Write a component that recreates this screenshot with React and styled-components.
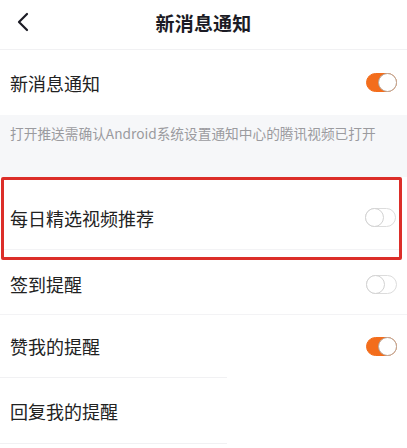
import React from 'react';
import styled, { createGlobalStyle } from 'styled-components';

const GlobalStyle = createGlobalStyle`
  html, body { margin: 0; padding: 0; background: #fff; }
  body { font-family: "Noto Sans CJK SC", "Noto Sans", sans-serif; }
`;

const Page = styled.div`
  width: 407px;
  height: 448px;
  overflow: hidden;
  background: #fff;
`;

const Header = styled.div`
  position: relative;
  height: 49px;
  display: flex;
  align-items: center;
  justify-content: center;
  border-bottom: 1px solid #f1f1f3;
`;

const Back = styled.div`
  position: absolute;
  left: 16px;
  top: 12px;
  width: 16px;
  height: 20px;
  display: flex;
`;

const Title = styled.div`
  font-size: 19px;
  font-weight: 700;
  color: #1b1b24;
  letter-spacing: 0.2px;
  margin-top: -5px;
`;

const Row = styled.div`
  display: flex;
  align-items: center;
  justify-content: space-between;
  height: ${p => p.h}px;
  padding: ${p => p.pad || '0 10px'};
  box-sizing: border-box;
  border-bottom: ${p => (p.line ? '1px solid #f3f3f5' : 'none')};
`;

const Label = styled.span`
  font-size: 18px;
  color: #222;
`;

const Note = styled.div`
  background: #f6f7f9;
  height: 62px;
  box-sizing: border-box;
  padding: 9px 10px 0;
  font-size: 13.7px;
  color: #9b9b9f;
  line-height: 18px;
  white-space: nowrap;
`;

const Highlight = styled.div`
  margin: 0 5px 0 1px;
  border: 3px solid #dc2e29;
  border-radius: 2px;
  padding-bottom: 7px;
  background: #fff;
`;

const ShortLine = styled.div`
  width: ${p => p.w}px;
  height: 1px;
  background: #f1f1f3;
`;

const Track = styled.div`
  position: relative;
  width: 31px;
  height: 19px;
  border-radius: 10px;
  box-sizing: border-box;
  background: ${p => (p.on ? '#f36d1c' : '#fff')};
  border: 1px solid ${p => (p.on ? '#f36d1c' : '#dcdcdc')};
`;

const Knob = styled.div`
  position: absolute;
  top: -1px;
  ${p => (p.on ? 'right: -1px;' : 'left: -1px;')}
  width: 19px;
  height: 19px;
  border-radius: 50%;
  box-sizing: border-box;
  background: #fff;
  border: 1px solid ${p => (p.on ? '#b8a89c' : '#d2d2d2')};
`;

const Toggle = ({ on }) => (
  <Track on={on}>
    <Knob on={on} />
  </Track>
);

export default function App() {
  return (
    <Page>
      <GlobalStyle />
      <Header>
        <Back>
          <svg width="16" height="20" viewBox="0 0 16 20">
            <polyline points="11,2 3,10 11,18" fill="none" stroke="#1b1b24" strokeWidth="2.2" strokeLinecap="round" strokeLinejoin="round" />
          </svg>
        </Back>
        <Title>新消息通知</Title>
      </Header>
      <Row h={65}>
        <Label>新消息通知</Label>
        <Toggle on />
      </Row>
      <Note>打开推送需确认Android系统设置通知中心的腾讯视频已打开</Note>
      <Highlight>
        <Row h={70} pad="6px 3px 0 6px" line>
          <Label>每日精选视频推荐</Label>
          <Toggle />
        </Row>
      </Highlight>
      <Row h={55} pad="0 10px 6px 10px" line>
        <Label>签到提醒</Label>
        <Toggle />
      </Row>
      <Row h={62}>
        <Label>赞我的提醒</Label>
        <Toggle on />
      </Row>
      <ShortLine w={227} />
      <Row h={65}>
        <Label>回复我的提醒</Label>
      </Row>
      <ShortLine w={227} />
    </Page>
  );
}
